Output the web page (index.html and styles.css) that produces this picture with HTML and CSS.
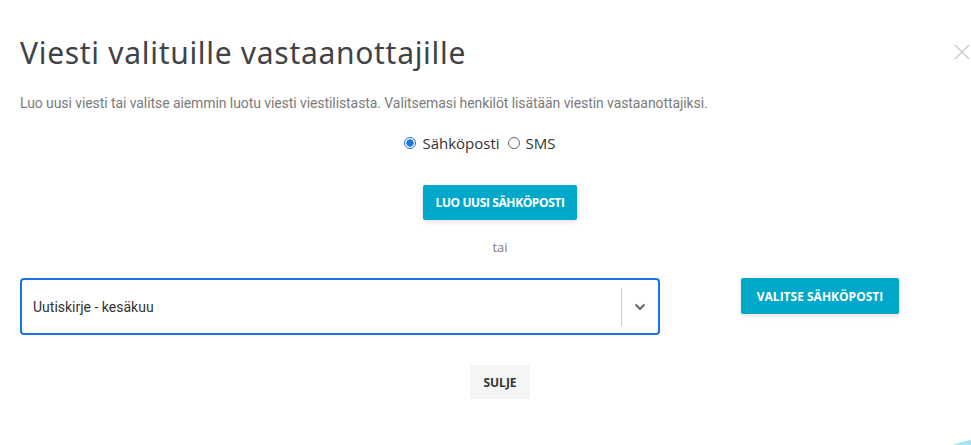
FILE: index.html
```html
<!DOCTYPE html>
<html lang="fi">
<head>
<meta charset="utf-8">
<title>Viesti valituille vastaanottajille</title>
<link rel="stylesheet" href="styles.css">
</head>
<body>
<div class="modal">
  <h1 class="title">Viesti valituille vastaanottajille</h1>
  <p class="desc">Luo uusi viesti tai valitse aiemmin luotu viesti viestilistasta. Valitsemasi henkilöt lisätään viestin vastaanottajiksi.</p>
  <div class="radios">
    <label class="radio"><span class="dot checked"></span>Sähköposti</label>
    <label class="radio"><span class="dot"></span>SMS</label>
  </div>
  <div class="center">
    <button class="btn primary create">LUO UUSI SÄHKÖPOSTI</button>
  </div>
  <div class="or">tai</div>
  <div class="row">
    <div class="select">
      <span class="value">Uutiskirje - kesäkuu</span>
      <span class="sep"></span>
      <span class="chev"><svg width="12" height="8" viewBox="0 0 12 8"><path d="M1.5 1.5 L6 6 L10.5 1.5" fill="none" stroke="#666" stroke-width="2"/></svg></span>
    </div>
    <div class="side">
      <button class="btn primary pick">VALITSE SÄHKÖPOSTI</button>
    </div>
  </div>
  <div class="center">
    <button class="btn light">SULJE</button>
  </div>
</div>
<div class="close"><svg width="16" height="16" viewBox="0 0 16 16"><path d="M1 1 L15 15 M15 1 L1 15" stroke="#c8c8c8" stroke-width="1.2"/></svg></div>
<div class="deco"></div>
</body>
</html>
```
FILE: styles.css
```css
html, body {
  margin: 0;
  padding: 0;
  background: #fff;
  overflow: hidden;
}
body {
  width: 971px;
  height: 445px;
  font-family: "Open Sans", sans-serif;
}
.modal {
  width: 960px;
  margin-left: 20px;
  padding-top: 36px;
}
.title {
  margin: 0;
  font-family: "Noto Sans", sans-serif;
  font-weight: 400;
  font-size: 30px;
  line-height: 34px;
  color: #3f4347;
  letter-spacing: 0.7px;
}
.desc {
  margin: 23px 0 0;
  font-family: "Roboto", sans-serif;
  font-size: 14px;
  line-height: 20px;
  color: #7b7b7b;
  letter-spacing: -0.08px;
}
.radios {
  display: flex;
  justify-content: center;
  gap: 8px;
  margin-top: 20px;
  padding-right: 40px;
  height: 20px;
  align-items: center;
}
.radio {
  display: flex;
  align-items: center;
  gap: 6px;
  font-size: 15px;
  color: #333;
}
.dot {
  width: 12px;
  height: 12px;
  border-radius: 50%;
  border: 1px solid #666;
  box-sizing: border-box;
  background: #fff;
}
.dot.checked {
  border: 1px solid #1a73e8;
  background: radial-gradient(circle, #1a73e8 0 3.4px, #fff 3.9px);
}
.center {
  display: flex;
  justify-content: center;
}
.btn {
  border: none;
  border-radius: 2px;
  font-family: "Open Sans", sans-serif;
  font-weight: 700;
  font-size: 12px;
  padding: 0;
  cursor: pointer;
}
.primary {
  background: #00a8ca;
  color: #fff;
  height: 35px;
  box-shadow: 0 2px 5px rgba(0, 0, 0, 0.12);
  letter-spacing: -0.2px;
}
.create {
  width: 154px;
  letter-spacing: -0.4px;
}
.pick {
  width: 158px;
  height: 36px;
  letter-spacing: 0;
}
.radios + .center {
  margin-top: 32px;
}
.or {
  margin-top: 17px;
  text-align: center;
  font-size: 13px;
  line-height: 20px;
  color: #7b7b7b;
}
.row {
  margin-top: 21px;
  display: grid;
  grid-template-columns: 640px 320px;
  align-items: start;
}
.select {
  box-sizing: border-box;
  height: 57px;
  border: 2px solid #1a73e8;
  border-radius: 4px;
  display: flex;
  align-items: center;
  padding-left: 11px;
}
.value {
  flex: 1;
  font-family: "Roboto", sans-serif;
  font-size: 14px;
  color: #333;
  letter-spacing: 0;
}
.sep {
  width: 1px;
  height: 38px;
  background: #ccc;
}
.chev {
  width: 36px;
  display: flex;
  justify-content: center;
}
.side {
  display: flex;
  justify-content: center;
}
.row + .center {
  margin-top: 30px;
}
.light {
  background: #f4f5f7;
  color: #333;
  height: 34px;
  padding: 0 13px;
}
.close {
  position: absolute;
  left: 954px;
  top: 44px;
  line-height: 0;
}
.deco {
  position: absolute;
  left: 940px;
  top: 439px;
  width: 90px;
  height: 40px;
  border-radius: 50%;
  background: linear-gradient(90deg, #c9f0f6, #4fcde0);
}
```
